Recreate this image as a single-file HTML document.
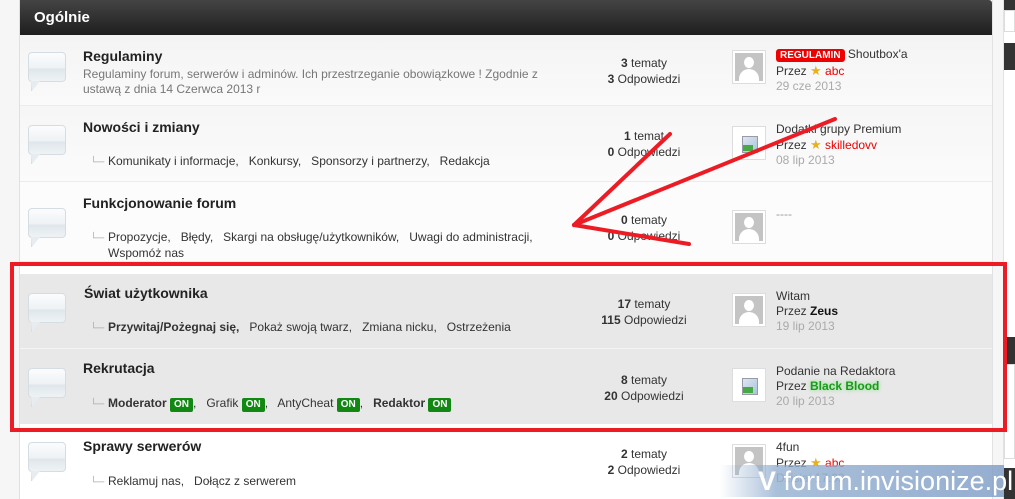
<!DOCTYPE html>
<html><head><meta charset="utf-8"><style>
*{margin:0;padding:0;box-sizing:border-box}
body{width:1015px;height:499px;overflow:hidden;background:#fff;font-family:"Liberation Sans",Arial,sans-serif;font-size:12px;color:#333;position:relative}
.a{position:absolute}
.hdr{left:20px;top:0;width:972px;height:35px;background:linear-gradient(#444,#1e1e1e);border-radius:0 3px 0 0;color:#fff;font-weight:bold;font-size:15px;padding:9px 14px}
.row{position:absolute;left:20px;width:972px;border-bottom:1px solid #ececec}
.bub{position:absolute;left:8px;width:38px;height:30px;border:1px solid #d6dde2;border-radius:4px;background:linear-gradient(#fbfcfd 0%,#eef2f5 55%,#dfe6eb 56%,#eef2f5 100%)}
.bub:after{content:"";position:absolute;left:2px;bottom:-10px;border-left:1px solid #d6dde2;width:0;height:0;border-top:10px solid #e6ecef;border-right:8px solid transparent}
.t{position:absolute;left:63px;font-weight:bold;font-size:14px;color:#222}
.d{position:absolute;left:63px;color:#777;font-size:12px;line-height:15px}
.sub{position:absolute;left:70px;color:#333;font-size:12px}
.sub i{font-style:normal;color:#aaa;display:inline-block;width:18px;font-size:10px}
.st{position:absolute;left:549px;width:150px;text-align:center;line-height:16px;color:#333}
.av{position:absolute;left:712px;width:34px;height:34px;border:1px solid #ddd;background:#fff;padding:2px}
.av div{width:28px;height:28px;background:#c4c4c4;position:relative;overflow:hidden}
.av div:before{content:"";position:absolute;left:9px;top:4px;width:10px;height:11px;border-radius:50%;background:#fff}
.av div:after{content:"";position:absolute;left:4px;top:16px;width:20px;height:18px;border-radius:10px 10px 0 0;background:#fff}
.av.b div{background:#fff}
.av.b div:before{left:7px;top:7px;width:14px;height:15px;border-radius:0;background:linear-gradient(135deg,#dde6f0,#aac4dc);border:1px solid #99a}
.av.b div:after{left:8px;top:16px;width:10px;height:6px;border-radius:0;background:#4a4}
.lp{position:absolute;left:756px;line-height:15px;color:#333}
.gr{color:#aaa}
.on{display:inline-block;background:#118811;color:#fff;font-weight:bold;font-size:10px;padding:1px 4px;border-radius:2px;line-height:12px}
.star{display:inline-block;color:#e9b020;font-size:13px}
</style></head><body>
<div class="a" style="left:0;top:0;width:20px;height:499px;background:#f6f6f6;border-right:1px solid #e0e0e0"></div>
<div class="a" style="left:992px;top:0;width:12px;height:499px;background:#f6f6f6;border-left:1px solid #e2e2e2;border-right:1px solid #e2e2e2"></div>
<div class="a" style="left:1004px;top:0;width:11px;height:10px;background:#333"></div>
<div class="a" style="left:1004px;top:10px;width:11px;height:22px;background:#fff;border:1px solid #ddd"></div>
<div class="a" style="left:1004px;top:43px;width:11px;height:27px;background:#333"></div>
<div class="a" style="left:1004px;top:70px;width:11px;height:255px;background:#fff"></div>
<div class="a" style="left:1004px;top:337px;width:11px;height:27px;background:#333"></div>
<div class="a" style="left:1004px;top:364px;width:11px;height:95px;background:#fff;border:1px solid #ddd"></div>
<div class="a" style="left:1004px;top:468px;width:11px;height:31px;background:#333"></div>

<div class="a hdr">Ogólnie</div>

<div class="row" style="top:35px;height:71px;background:linear-gradient(#f4f4f4,#fafafa)">
<div class="bub" style="top:17px"></div>
<div class="t" style="top:13px">Regulaminy</div>
<div class="d" style="top:32px">Regulaminy forum, serwerów i adminów. Ich przestrzeganie obowiązkowe ! Zgodnie z<br>ustawą z dnia 14 Czerwca 2013 r</div>
<div class="st" style="top:20px"><b>3</b> tematy<br><b>3</b> Odpowiedzi</div>
<div class="av" style="top:15px"><div></div></div>
<div class="lp" style="top:12px"><span style="background:#ee0000;color:#fff;font-weight:bold;font-size:10px;padding:1px 4px;border-radius:3px">REGULAMIN</span> Shoutbox'a<br>Przez <span class="star">★</span> <span style="color:#e00">abc</span><br><span class="gr">29 cze 2013</span></div>
</div>

<div class="row" style="top:106px;height:76px;background:linear-gradient(#f6f6f6,#fbfbfb)">
<div class="bub" style="top:19px"></div>
<div class="t" style="top:13px">Nowości i zmiany</div>
<div class="sub" style="top:48px"><i>└─</i>Komunikaty i informacje,&nbsp;&nbsp; Konkursy,&nbsp;&nbsp; Sponsorzy i partnerzy,&nbsp;&nbsp; Redakcja</div>
<div class="st" style="top:22px"><b>1</b> temat<br><b>0</b> Odpowiedzi</div>
<div class="av b" style="top:20px"><div></div></div>
<div class="lp" style="top:16px">Dodatki grupy Premium<br>Przez <span class="star">★</span> <span style="color:#e00">skilledovv</span><br><span class="gr">08 lip 2013</span></div>
</div>

<div class="row" style="top:182px;height:80px;background:#fcfcfc">
<div class="bub" style="top:26px"></div>
<div class="t" style="top:13px">Funkcjonowanie forum</div>
<div class="sub" style="top:48px;line-height:15px"><i>└─</i>Propozycje,&nbsp;&nbsp; Błędy,&nbsp;&nbsp; Skargi na obsługę/użytkowników,&nbsp;&nbsp; Uwagi do administracji,<br><i></i>Wspomóż nas</div>
<div class="st" style="top:30px"><b>0</b> tematy<br><b>0</b> Odpowiedzi</div>
<div class="av" style="top:28px"><div></div></div>
<div class="lp" style="top:25px;color:#999">----</div>
</div>

<div class="row" style="top:274px;height:75px;background:#e8e8e8;border-bottom:1px solid #f4f4f4">
<div class="bub" style="top:19px"></div>
<div class="t" style="top:11px;left:64px">Świat użytkownika</div>
<div class="sub" style="top:46px"><i>└─</i><b>Przywitaj/Pożegnaj się,</b>&nbsp;&nbsp; Pokaż swoją twarz,&nbsp;&nbsp; Zmiana nicku,&nbsp;&nbsp; Ostrzeżenia</div>
<div class="st" style="top:22px"><b>17</b> tematy<br><b>115</b> Odpowiedzi</div>
<div class="av" style="top:19px"><div></div></div>
<div class="lp" style="top:15px">Witam<br>Przez <b style="color:#111">Zeus</b><br><span class="gr">19 lip 2013</span></div>
</div>

<div class="row" style="top:349px;height:75px;background:#e8e8e8;border-bottom:none">
<div class="bub" style="top:19px"></div>
<div class="t" style="top:11px">Rekrutacja</div>
<div class="sub" style="top:47px"><i>└─</i><b>Moderator</b> <span class="on">ON</span>,&nbsp;&nbsp; Grafik <span class="on">ON</span>,&nbsp;&nbsp; AntyCheat <span class="on">ON</span>,&nbsp;&nbsp; <b>Redaktor</b> <span class="on">ON</span></div>
<div class="st" style="top:23px"><b>8</b> tematy<br><b>20</b> Odpowiedzi</div>
<div class="av b" style="top:19px"><div></div></div>
<div class="lp" style="top:15px">Podanie na Redaktora<br>Przez <b style="color:#1a9a1a;text-shadow:0 0 4px #7d7">Black Blood</b><br><span class="gr">20 lip 2013</span></div>
</div>

<div class="row" style="top:432px;height:67px;background:#fff;border:none">
<div class="bub" style="top:10px"></div>
<div class="t" style="top:6px">Sprawy serwerów</div>
<div class="sub" style="top:42px"><i>└─</i>Reklamuj nas,&nbsp;&nbsp; Dołącz z serwerem</div>
<div class="st" style="top:14px"><b>2</b> tematy<br><b>2</b> Odpowiedzi</div>
<div class="av" style="top:12px"><div></div></div>
<div class="lp" style="top:8px">4fun<br>Przez <span class="star">★</span> <span style="color:#e00">abc</span><br><span class="gr">Dzisiaj 17:09</span></div>
</div>

<div class="a" style="left:10px;top:262px;width:997px;height:170px;border:4px solid #ed1c24"></div>

<svg class="a" style="left:0;top:0" width="1015" height="499">
<g stroke="#ed1c24" stroke-width="4" stroke-linecap="round" fill="none">
<line x1="574" y1="225" x2="670" y2="134"/>
<line x1="574" y1="225" x2="835" y2="119"/>
<line x1="574" y1="225" x2="689" y2="244"/>
</g>
</svg>

<div class="a" style="left:720px;top:465px;width:284px;height:32px;background:linear-gradient(90deg,rgba(140,170,205,0),rgba(140,170,205,.75) 20%,rgba(130,160,200,.85));"></div>
<div class="a" style="left:758px;top:467px;color:#fff;font-size:27px;line-height:28px;white-space:nowrap"><span style="font-weight:bold">V</span> forum.invisionize.pl</div>
</body></html>
